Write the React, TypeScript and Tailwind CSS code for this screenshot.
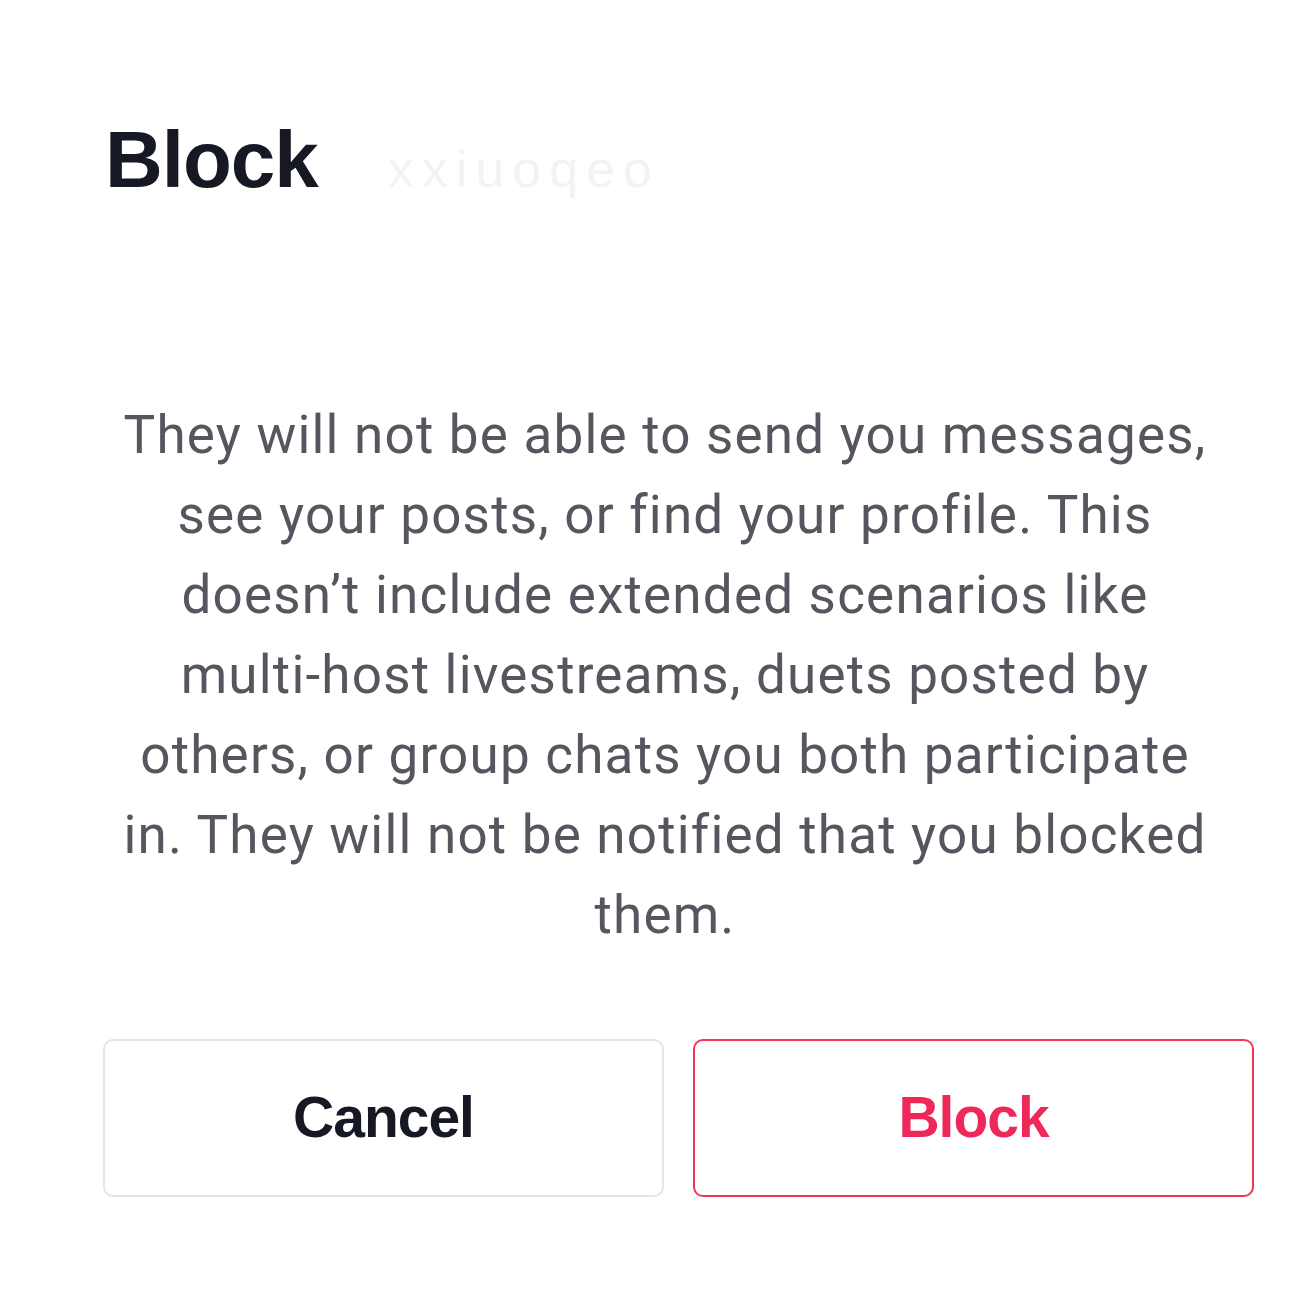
import React from "react";

const lines = [
  "They will not be able to send you messages,",
  "see your posts, or find your profile. This",
  "doesn’t include extended scenarios like",
  "multi-host livestreams, duets posted by",
  "others, or group chats you both participate",
  "in. They will not be notified that you blocked",
  "them.",
];

export default function App() {
  return (
    <div className="w-[1310px] h-[1296px] bg-white overflow-hidden">
      <div className="pt-[116px] pl-[105px] flex items-baseline">
        <h1
          className="text-[80px] leading-[88px] font-bold text-[#161823] tracking-[-1px]"
          style={{ fontFamily: '"Liberation Sans", Arial, sans-serif' }}
        >
          Block
        </h1>
        <span
          className="ml-[70px] text-[52px] text-[#f3f3f4] tracking-[8px]"
          style={{ fontFamily: '"Liberation Sans", Arial, sans-serif' }}
        >
          xxiuoqeo
        </span>
      </div>
      <div
        className="mt-[187px] ml-[65px] w-[1200px] text-center text-[53px] leading-[80px] text-[#55565e] tracking-[1.2px]"
        style={{ fontFamily: 'Roboto, "Noto Sans", sans-serif' }}
      >
        {lines.map((l) => (
          <p key={l} className="whitespace-nowrap">
            {l}
          </p>
        ))}
      </div>
      <div
        className="mt-[84px] ml-[103px] flex gap-[29px]"
        style={{ fontFamily: '"Liberation Sans", Arial, sans-serif' }}
      >
        <button className="w-[561px] h-[158px] rounded-[10px] border-2 border-[#e5e5e7] bg-white text-[57px] font-bold text-[#161823] tracking-[-1px]">
          Cancel
        </button>
        <button className="w-[561px] h-[158px] rounded-[10px] border-2 border-[#f0365a] bg-white text-[57px] font-bold text-[#f0285a] tracking-[-1px]">
          Block
        </button>
      </div>
    </div>
  );
}
